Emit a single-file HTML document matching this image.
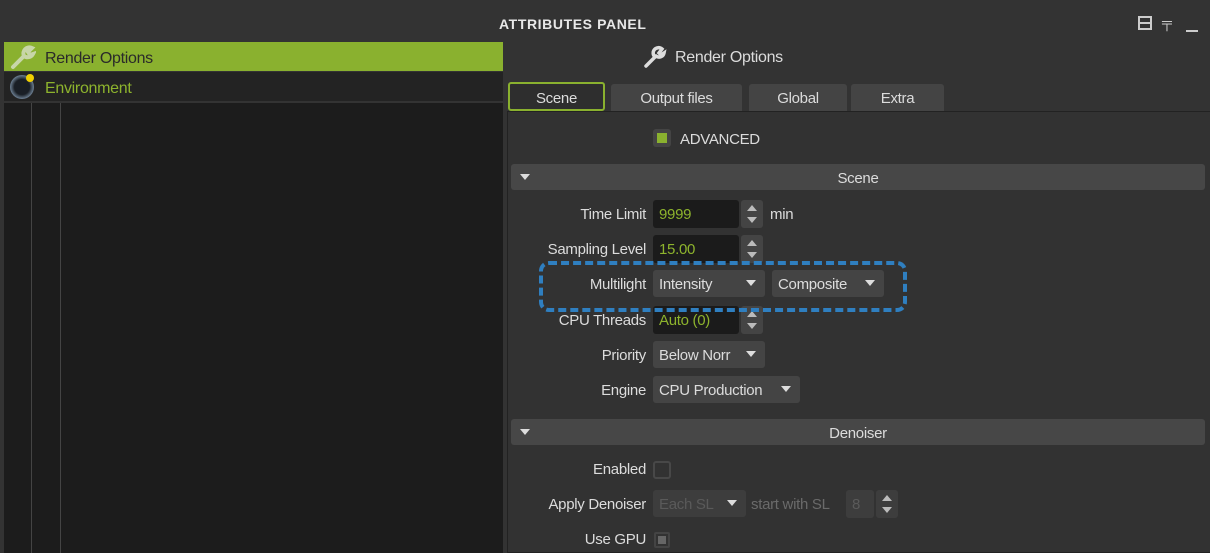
<!DOCTYPE html><html><head><style>
*{margin:0;padding:0;box-sizing:border-box}
body{width:1210px;height:553px;background:#333;font-family:"Liberation Sans",sans-serif;font-size:15px;color:#dcdcdc;position:relative;overflow:hidden;letter-spacing:-0.3px}
.a{position:absolute}
.lbl{position:absolute;text-align:right;width:200px;left:446px}
.box{position:absolute;background:#1b1b1b;border-radius:3px;color:#8db32d;padding:6px 6px}
.spin{position:absolute;background:#444;border-radius:3px;width:22px}
.spin:before{content:"";position:absolute;left:6px;top:5px;border:5px solid transparent;border-bottom:6px solid #bbb;border-top:0}
.spin:after{content:"";position:absolute;left:6px;bottom:5px;border:5px solid transparent;border-top:6px solid #bbb;border-bottom:0}
.dd{position:absolute;background:#444;border-radius:3px;padding:6px 6px;height:26px}
.dd:after{content:"";position:absolute;right:9px;top:10px;border:5px solid transparent;border-top:6px solid #ddd;border-bottom:0}
.tab{position:absolute;top:84px;height:27px;background:#444;border-radius:3px 3px 0 0;text-align:center;padding-top:6px}
.hdr{position:absolute;left:511px;width:694px;height:26px;background:#474747;border-radius:3px;text-align:center;padding-top:6px;padding-left:0}
.hdr:before{content:"";position:absolute;left:9px;top:10px;border:5px solid transparent;border-top:6px solid #ddd;border-bottom:0}
</style></head><body>
<div class="a" style="left:499px;top:16px;font-weight:bold;font-size:14px;color:#e8e8e8;letter-spacing:0.6px">ATTRIBUTES PANEL</div>
<div class="a" style="left:1138px;top:16px;width:14px;height:14px;border:2px solid #ccc"></div>
<div class="a" style="left:1138px;top:22px;width:14px;height:2px;background:#ccc"></div>
<div class="a" style="left:1162px;top:14px;color:#ccc;font-size:14px">╤</div>
<div class="a" style="left:1186px;top:30px;width:12px;height:2px;background:#ccc"></div>
<!-- left -->
<div class="a" style="left:4px;top:42px;width:499px;height:29px;background:#8ab12f;color:#2a2a2a;padding:8px 0 0 41px;font-size:16px">Render Options</div>
<svg class="a" style="left:10px;top:44px" width="26" height="26" viewBox="0 0 26 26"><path d="M3 23 L14 12 M14 12 a6 6 0 0 1 8-8 l-4 4 2 3 3 -1 a6 6 0 0 1 -9 2" stroke="#c8d6a8" stroke-width="4" fill="none" stroke-linecap="round"/></svg>
<div class="a" style="left:4px;top:72px;width:499px;height:29px;background:#232323;color:#8db32d;padding:8px 0 0 41px;font-size:16px">Environment</div>
<div class="a" style="left:10px;top:75px;width:24px;height:24px;border-radius:50%;background:radial-gradient(#1a1f26 45%,#6c7f92 70%,#2a3440)"></div>
<div class="a" style="left:26px;top:74px;width:8px;height:8px;border-radius:50%;background:#f0d000"></div>
<div class="a" style="left:4px;top:103px;width:499px;height:450px;background:#1c1c1c"></div>
<div class="a" style="left:31px;top:103px;width:1px;height:450px;background:#444"></div>
<div class="a" style="left:60px;top:103px;width:1px;height:450px;background:#444"></div>
<!-- right -->
<svg class="a" style="left:643px;top:45px" width="24" height="24" viewBox="0 0 24 24"><path d="M3 21 L12 12 M12 12 a5 5 0 0 1 7-8 l-3 4 2 2 3-2 a5 5 0 0 1 -8 3" stroke="#ddd" stroke-width="3.5" fill="none" stroke-linecap="round"/></svg>
<div class="a" style="left:675px;top:49px;font-size:16px">Render Options</div>
<div class="a" style="left:507px;top:111px;width:703px;height:442px;background:#323232;border:1px solid #222;border-right:0"></div>
<div class="tab" style="left:508px;width:97px;background:#2e2e2e;border:2px solid #8ab12f;border-radius:3px;height:29px;top:82px">Scene</div>
<div class="tab" style="left:611px;width:131px">Output files</div>
<div class="tab" style="left:749px;width:98px">Global</div>
<div class="tab" style="left:851px;width:93px">Extra</div>
<div class="a" style="left:653px;top:129px;width:18px;height:18px;background:#444;border-radius:3px"></div>
<div class="a" style="left:657px;top:133px;width:10px;height:10px;background:#8ab12f"></div>
<div class="a" style="left:680px;top:131px">ADVANCED</div>
<div class="hdr" style="top:164px">Scene</div>
<div class="lbl" style="top:206px">Time Limit</div>
<div class="box" style="left:653px;top:200px;width:86px;height:28px">9999</div>
<div class="spin" style="left:741px;top:200px;height:28px"></div>
<div class="a" style="left:770px;top:206px">min</div>
<div class="lbl" style="top:241px">Sampling Level</div>
<div class="box" style="left:653px;top:235px;width:86px;height:28px">15.00</div>
<div class="spin" style="left:741px;top:235px;height:28px"></div>
<div class="lbl" style="top:276px">Multilight</div>
<div class="dd" style="left:653px;top:270px;width:112px;height:27px">Intensity</div>
<div class="dd" style="left:772px;top:270px;width:112px;height:27px">Composite</div>
<div class="lbl" style="top:312px">CPU Threads</div>
<div class="box" style="left:653px;top:306px;width:86px;height:28px">Auto (0)</div>
<div class="spin" style="left:741px;top:306px;height:28px"></div>
<div class="a" style="left:539px;top:261px;width:368px;height:51px;border:4px dashed #2f7fc0;border-radius:10px"></div>
<div class="lbl" style="top:347px">Priority</div>
<div class="dd" style="left:653px;top:341px;width:112px;height:27px;overflow:hidden">Below Norr</div>
<div class="lbl" style="top:382px">Engine</div>
<div class="dd" style="left:653px;top:376px;width:147px;height:27px">CPU Production</div>
<div class="hdr" style="top:419px">Denoiser</div>
<div class="lbl" style="top:461px">Enabled</div>
<div class="a" style="left:653px;top:461px;width:18px;height:18px;border:2px solid #484848;border-radius:3px"></div>
<div class="lbl" style="top:496px">Apply Denoiser</div>
<div class="dd" style="left:653px;top:490px;width:93px;height:27px;color:#5a5a5a;background:#3d3d3d">Each SL</div>
<div class="a" style="left:751px;top:496px;color:#6a6a6a">start with SL</div>
<div class="box" style="left:846px;top:490px;width:28px;height:28px;background:#3d3d3d;color:#5a5a5a">8</div>
<div class="spin" style="left:876px;top:490px;height:28px;background:#3d3d3d"></div>
<div class="lbl" style="top:531px">Use GPU</div>
<div class="a" style="left:654px;top:532px;width:16px;height:16px;border:2px solid #444;border-radius:2px"></div>
<div class="a" style="left:658px;top:536px;width:8px;height:8px;background:#666"></div>
</body></html>
